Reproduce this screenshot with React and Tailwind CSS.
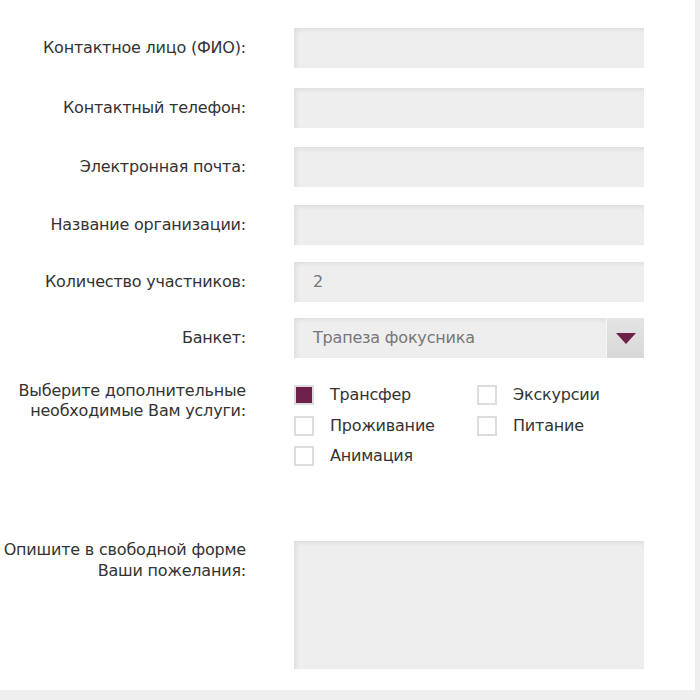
import React from "react";

const inputCls =
  "h-10 w-[350px] bg-[#eeeeee] shadow-[inset_2px_2px_4px_rgba(0,0,0,0.07)]";

function Row({ label, mt, children }) {
  return (
    <div className={`flex items-center ${mt}`}>
      <div className="w-[246px] text-right text-[#333] leading-[20px] whitespace-nowrap">{label}</div>
      <div className="ml-[48px]">{children}</div>
    </div>
  );
}

function Check({ label, checked }) {
  return (
    <div className="flex items-center h-[20px]">
      <div className="w-[20px] h-[20px] border-2 border-[#dddddd] bg-white flex items-center justify-center">
        {checked && <div className="w-[16px] h-[16px] bg-[#6d2148]" />}
      </div>
      <span className="ml-[16px] text-[#333] whitespace-nowrap">{label}</span>
    </div>
  );
}

export default function App() {
  return (
    <div
      className="w-[700px] h-[700px] bg-[#efefef] flex flex-col text-[16px] tracking-[-0.2px]"
      style={{ fontFamily: '"DejaVu Sans", sans-serif' }}
    >
      <div className="flex flex-1">
        <div className="w-[695px] h-[690px] bg-white pt-[28px] flex flex-col">
          <Row label="Контактное лицо (ФИО):" mt="">
            <div className={inputCls} />
          </Row>
          <Row label="Контактный телефон:" mt="mt-[20px]">
            <div className={inputCls} />
          </Row>
          <Row label="Электронная почта:" mt="mt-[19px]">
            <div className={inputCls} />
          </Row>
          <Row label="Название организации:" mt="mt-[18px]">
            <div className={inputCls} />
          </Row>
          <Row label="Количество участников:" mt="mt-[17px]">
            <div className={`${inputCls} flex items-center pl-[19px] text-[#777]`}>2</div>
          </Row>
          <Row label="Банкет:" mt="mt-[16px]">
            <div className={`${inputCls} flex items-center justify-between`}>
              <span className="pl-[19px] text-[#777]">Трапеза фокусника</span>
              <div className="w-[38px] h-10 bg-gradient-to-b from-[#e4e4e4] to-[#d8d8d8] border-l border-[#f6f6f6] flex items-center justify-center">
                <svg width="20" height="11" viewBox="0 0 20 11">
                  <polygon points="0,0 20,0 10,11" fill="#6d2148" />
                </svg>
              </div>
            </div>
          </Row>
          <div className="flex items-start mt-[23px] h-[85px]">
            <div className="w-[246px] text-right text-[#333] leading-[20px] whitespace-nowrap">
              Выберите дополнительные
              <br />
              необходимые Вам услуги:
            </div>
            <div className="ml-[48px] pt-[4px] grid grid-cols-[183px_auto] gap-y-[10.5px]">
              <Check label="Трансфер" checked />
              <Check label="Экскурсии" />
              <Check label="Проживание" />
              <Check label="Питание" />
              <Check label="Анимация" />
            </div>
          </div>
          <div className="flex items-start mt-[73px]">
            <div className="w-[246px] text-right text-[#333] leading-[21px] whitespace-nowrap">
              Опишите в свободной форме
              <br />
              Ваши пожелания:
            </div>
            <div className="ml-[48px] mt-[2px] w-[350px] h-[128px] bg-[#eeeeee] shadow-[inset_2px_2px_4px_rgba(0,0,0,0.07)]" />
          </div>
        </div>
        <div className="w-[5px] bg-[#efefef]" />
      </div>
    </div>
  );
}
